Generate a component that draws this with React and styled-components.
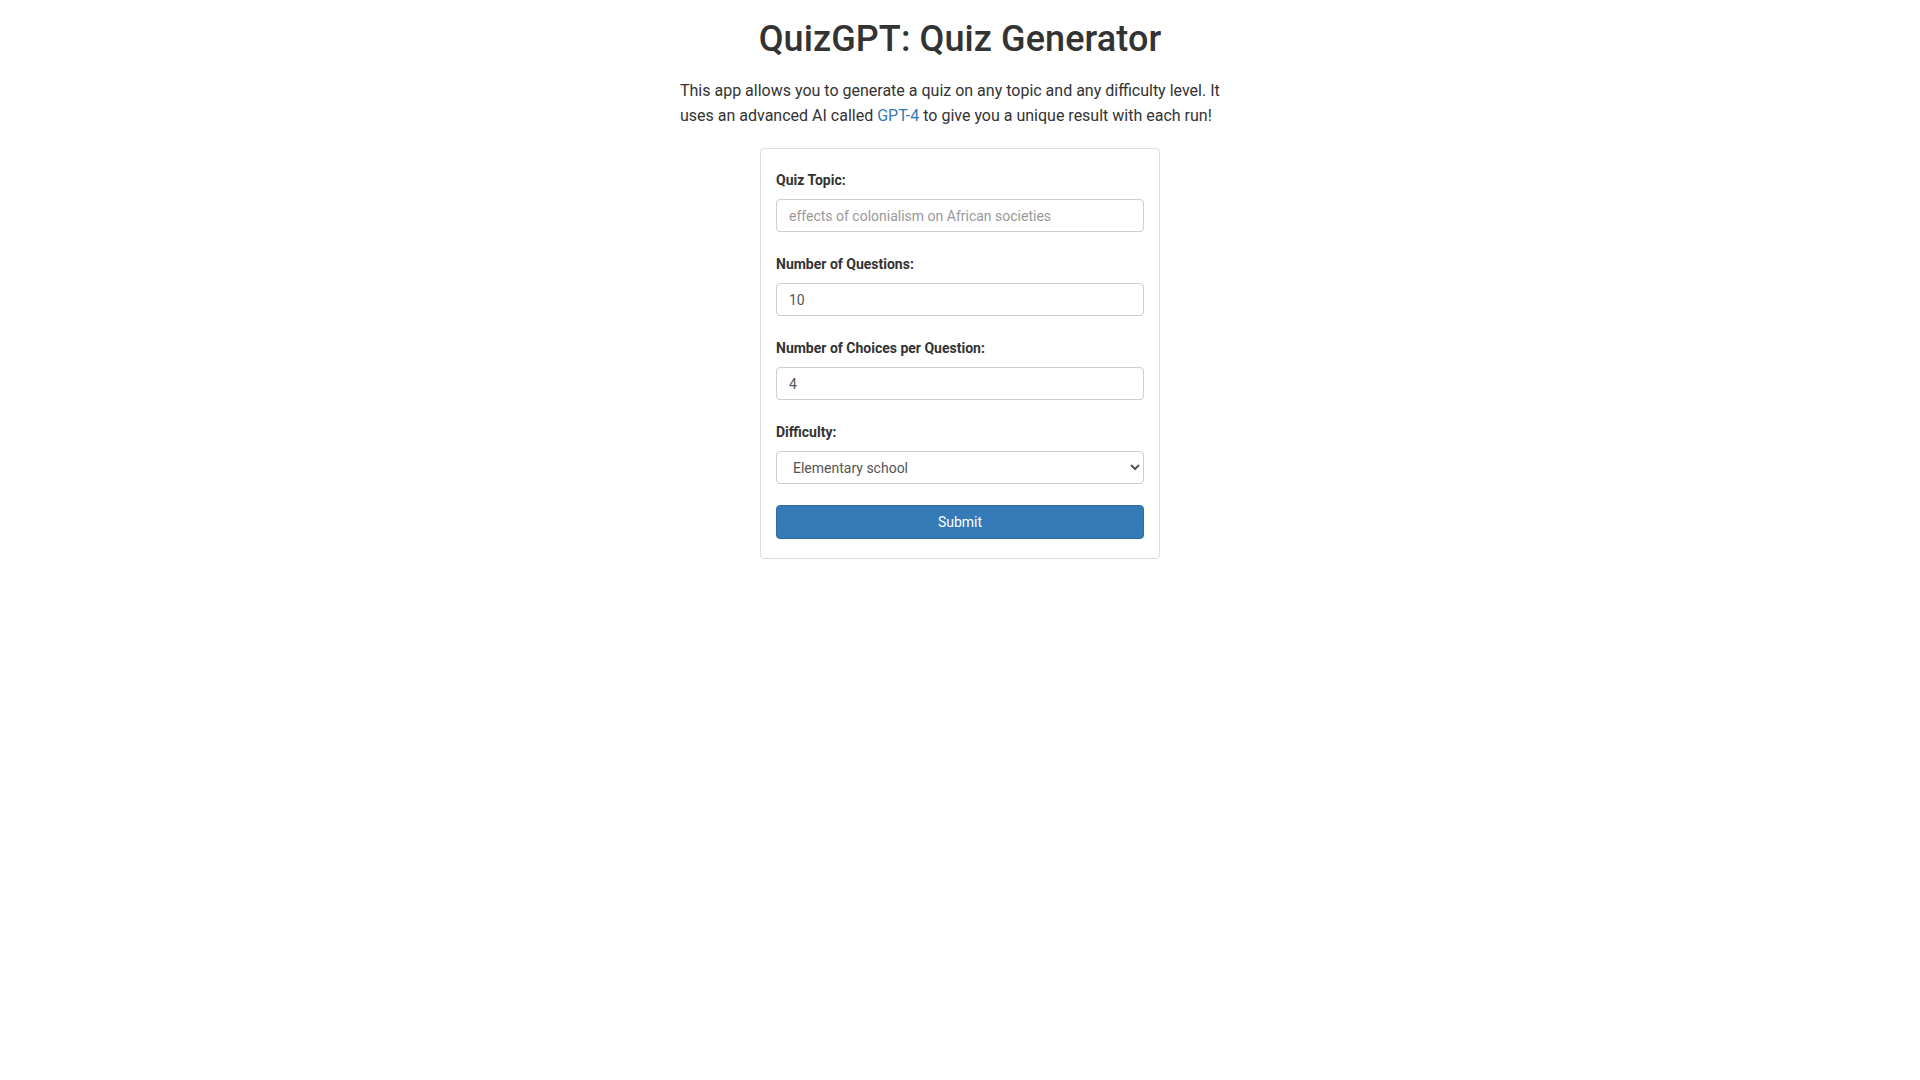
import React from "react";
import styled, { createGlobalStyle } from "styled-components";

const GlobalStyle = createGlobalStyle`
  html, body { margin: 0; padding: 0; background: #ffffff; }
  body {
    font-family: Roboto, "Liberation Sans", Arial, sans-serif;
    color: #333333;
  }
  * { box-sizing: border-box; }
`;

const Page = styled.main`
  display: flex;
  flex-direction: column;
  align-items: center;
  padding-top: 15px;
`;

const Title = styled.h1`
  margin: 0;
  font-size: 36px;
  line-height: 48px;
  font-weight: 500;
  color: #333333;
  letter-spacing: 0.1px;
`;

const Intro = styled.p`
  width: 560px;
  margin: 16px 0 0;
  font-size: 16px;
  line-height: 24.5px;
  color: #333333;
`;

const Link = styled.a`
  color: #337ab7;
  text-decoration: none;
`;

const Card = styled.form`
  width: 400px;
  margin-top: 20px;
  padding: 21px 15px 19px;
  border: 1px solid #dddddd;
  border-radius: 4px;
  background: #ffffff;
  display: flex;
  flex-direction: column;
`;

const Group = styled.div`
  display: flex;
  flex-direction: column;
  margin-bottom: ${(p) => (p.$last ? "21px" : "22px")};
`;

const Label = styled.label`
  font-size: 14px;
  line-height: 20px;
  font-weight: 700;
  color: #333333;
  margin-bottom: 9px;
`;

const Input = styled.input`
  height: 33px;
  width: 100%;
  padding: 0 12px;
  font-family: Roboto, "Liberation Sans", Arial, sans-serif;
  font-size: 14px;
  color: #555555;
  border: 1px solid #cccccc;
  border-radius: 4px;
  background: #ffffff;
  outline: none;
  &::placeholder { color: #999999; }
`;

const Select = styled.select`
  height: 33px;
  width: 100%;
  padding: 0 12px;
  font-family: Roboto, "Liberation Sans", Arial, sans-serif;
  font-size: 14px;
  color: #555555;
  border: 1px solid #cccccc;
  border-radius: 4px;
  background: #ffffff;
  outline: none;
`;

const Button = styled.button`
  height: 34px;
  width: 100%;
  border: 1px solid #2e6da4;
  border-radius: 4px;
  background: #337ab7;
  color: #ffffff;
  font-family: Roboto, "Liberation Sans", Arial, sans-serif;
  font-size: 14px;
  cursor: pointer;
`;

export default function App() {
  return (
    <>
      <GlobalStyle />
      <Page>
        <Title>QuizGPT: Quiz Generator</Title>
        <Intro>
          This app allows you to generate a quiz on any topic and any difficulty level. It uses an
          advanced AI called <Link href="#">GPT-4</Link> to give you a unique result with each run!
        </Intro>
        <Card onSubmit={(e) => e.preventDefault()}>
          <Group>
            <Label>Quiz Topic:</Label>
            <Input placeholder="effects of colonialism on African societies" />
          </Group>
          <Group>
            <Label>Number of Questions:</Label>
            <Input defaultValue="10" />
          </Group>
          <Group>
            <Label>Number of Choices per Question:</Label>
            <Input defaultValue="4" />
          </Group>
          <Group $last>
            <Label>Difficulty:</Label>
            <Select defaultValue="Elementary school">
              <option>Elementary school</option>
              <option>Middle school</option>
              <option>High school</option>
              <option>College</option>
            </Select>
          </Group>
          <Button type="submit">Submit</Button>
        </Card>
      </Page>
    </>
  );
}
